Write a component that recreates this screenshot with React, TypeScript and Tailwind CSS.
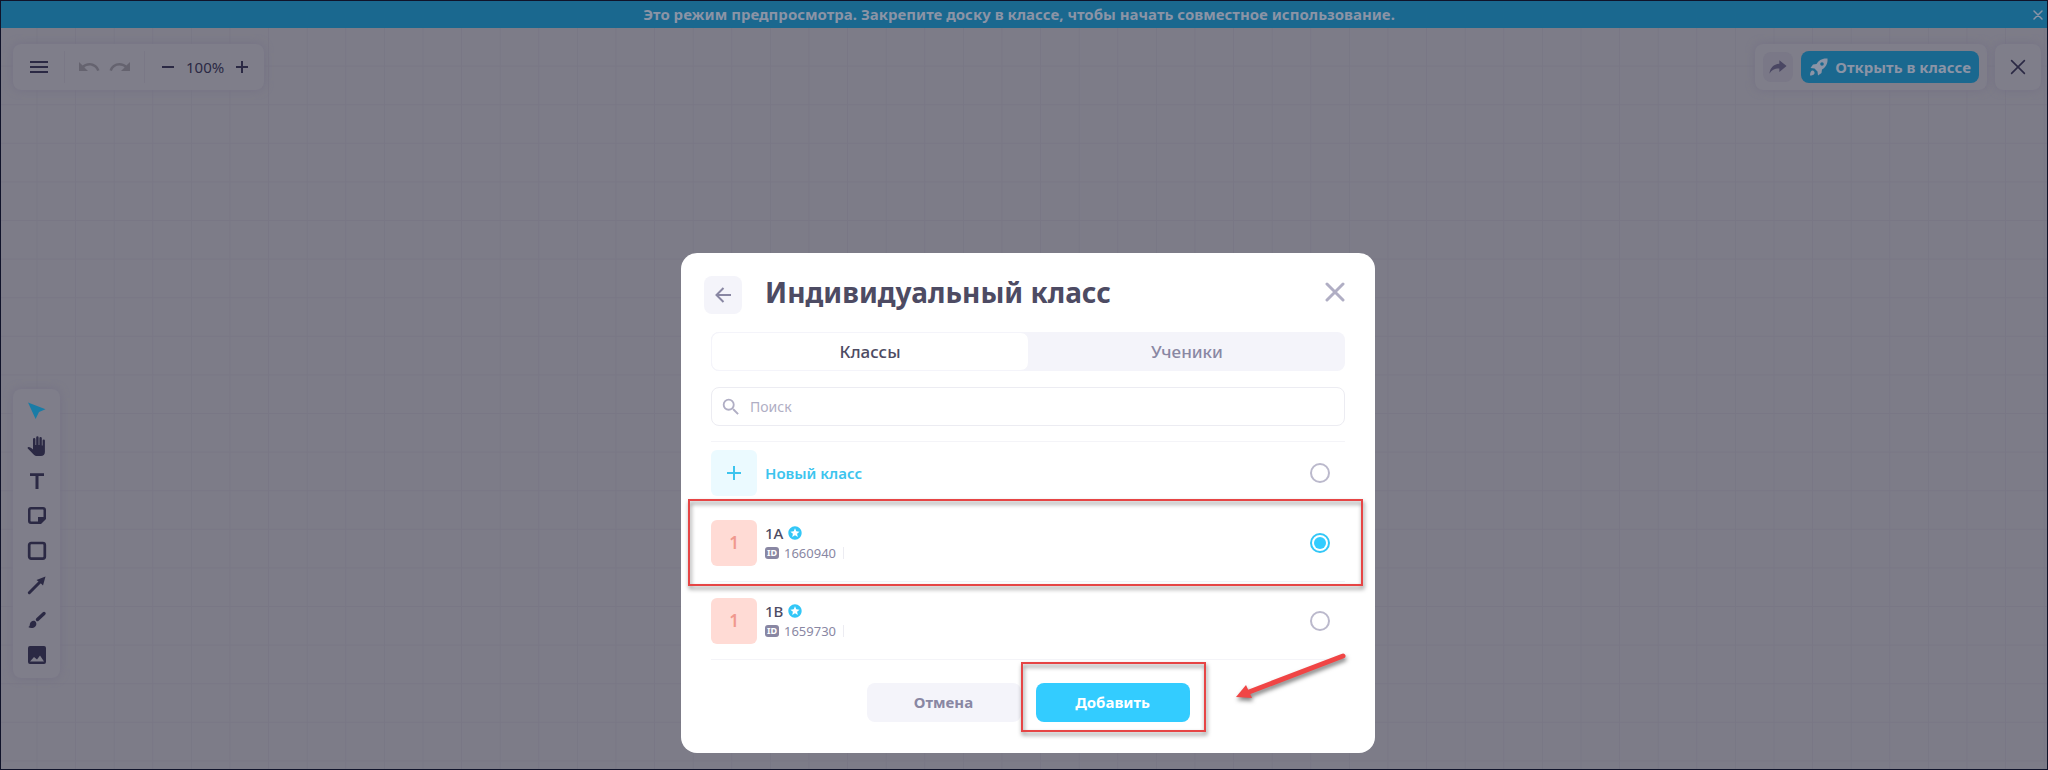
import { useState } from 'react'
import type { ReactNode } from 'react'
import { MdMenu, MdUndo, MdRedo, MdSearch, MdStars } from 'react-icons/md'

const tools = [
  {
    name: 'Выделение',
    active: true,
    icon: <path d="M1 1.5 18.5 8.2 12 11 8.6 18z" />,
  },
  {
    name: 'Рука',
    icon: (
      <path d="M6 10V3.200a1.200 1.200 0 0 1 2.400 0V9h.8V1.500a1.200 1.200 0 0 1 2.400 0V9h.8V2.200a1.200 1.200 0 0 1 2.400 0V9.500h.8V4.600a1.150 1.150 0 0 1 2.300 0V16c0 2.600-1.600 4-4 4H10c-1.600 0-2.600-.6-3.600-1.800L.8 12.400c-.5-.6 0-1.500.9-1.400 1 .1 3 1.200 4.300 2.500z" />
    ),
  },
  { name: 'Текст', icon: <path d="M3 2.200h14v2.800h-5.500V18h-3V5H3z" /> },
  {
    name: 'Стикер',
    icon: (
      <path
        fillRule="evenodd"
        d="M4 1h12a3 3 0 0 1 3 3v9l-5 5H4a3 3 0 0 1-3-3V4a3 3 0 0 1 3-3zm0 2.500a.6.6 0 0 0-.5.5v11c0 .3.2.5.5.5h7V11h5.500V4a.6.6 0 0 0-.5-.5z"
      />
    ),
  },
  {
    name: 'Фигура',
    icon: <rect x="2.200" y="2" width="15.600" height="15.600" rx="2" fill="none" stroke="currentColor" strokeWidth="2.700" />,
  },
  {
    name: 'Стрелка',
    icon: (
      <>
        <path d="M2.300 16.700 13 6" stroke="currentColor" strokeWidth="3" strokeLinecap="round" />
        <path d="M18.500.5 16 9.500 13.500 7 9.500 4z" />
      </>
    ),
  },
  {
    name: 'Кисть',
    icon: (
      <>
        <path d="M10.500 8.500 17 2.500" stroke="currentColor" strokeWidth="3.400" strokeLinecap="round" />
        <path d="M8 10a3.700 3.700 0 0 1 .3 5.500c-2 2-5 2-7 .6 1.400-.4 1.400-1.400 1.600-3 .3-2.500 3-4.200 5.100-3.100z" />
      </>
    ),
  },
  {
    name: 'Изображение',
    icon: (
      <path
        fillRule="evenodd"
        d="M3 0h14a2 2 0 0 1 2 2v14a2 2 0 0 1-2 2H3a2 2 0 0 1-2-2V2a2 2 0 0 1 2-2zm0 15.500h14l-4-6-3 4-3-2.500z"
      />
    ),
  },
]

const classes = [
  { id: '1660940', name: '1A' },
  { id: '1659730', name: '1B' },
]

function Icon({ children, size = 20 }: { children: ReactNode; size?: number }) {
  return (
    <svg width={size} height={size} viewBox="0 0 20 20" fill="currentColor" aria-hidden="true">
      {children}
    </svg>
  )
}

function Cross({ size, width }: { size: number; width: number }) {
  return (
    <svg width={size} height={size} viewBox="0 0 20 20" stroke="currentColor" strokeWidth={width} strokeLinecap="round" aria-hidden="true">
      <path d="M2 2 18 18M18 2 2 18" />
    </svg>
  )
}

function Radio({ id, checked, onChange }: { id: string; checked: boolean; onChange: () => void }) {
  return (
    <input
      id={id}
      type="radio"
      name="class"
      checked={checked}
      onChange={onChange}
      className="mr-[15px] size-5 appearance-none rounded-full border-2 border-[#bbb9cc] bg-clip-content p-[2px] checked:border-[#33c7f7] checked:bg-[#33ccff]"
    />
  )
}

function Board() {
  return (
    <div className="relative flex flex-1 flex-col justify-between">
      <svg className="absolute inset-0 h-full w-full" aria-hidden="true">
        <defs>
          <pattern id="grid" x="35.500" y="-1" width="38.600" height="38.600" patternUnits="userSpaceOnUse">
            <path d="M.5 0V38.600M0 .5H38.600" stroke="#797785" strokeWidth="1" />
          </pattern>
        </defs>
        <rect width="100%" height="100%" fill="url(#grid)" />
      </svg>

      <div className="relative flex justify-between pt-4 pr-[6px] pl-3">
        <div className="flex h-[46px] items-center rounded-lg bg-[#7f7e8a] pr-4 shadow-[0_0_8px_#757285]">
          <button aria-label="Меню" className="pr-[13px] pl-[14px]">
            <MdMenu size={24} />
          </button>
          <div className="flex h-8 items-center gap-[7px] border-x border-[#7a7886] px-3 text-[#65636f]">
            <button aria-label="Отменить"><MdUndo size={24} /></button>
            <button aria-label="Повторить"><MdRedo size={24} /></button>
          </div>
          <div className="flex items-center gap-3 pl-[17px] text-[15px]">
            <button aria-label="Уменьшить">
              <svg width="12" height="12" stroke="currentColor" strokeWidth="2"><path d="M0 6H12" /></svg>
            </button>
            100%
            <button aria-label="Увеличить">
              <svg width="12" height="12" stroke="currentColor" strokeWidth="2"><path d="M0 6H12M6 0V12" /></svg>
            </button>
          </div>
        </div>

        <div className="flex gap-2">
          <div className="flex h-[46px] items-center gap-2 rounded-lg bg-[#7f7e8a] px-2 shadow-[0_0_8px_#757285]">
            <button aria-label="Поделиться" className="flex size-[30px] items-center justify-center rounded-lg bg-[#7a7887] text-[#4a4763]">
              <Icon size={18}>
                <path d="M11.500 2.500 19.500 9l-8 6.500v-3.800C6.500 11.500 3 13 .5 17.500 1.200 11 5 6.800 11.500 6.300z" />
              </Icon>
            </button>
            <button className="flex h-8 items-center gap-[6px] rounded-lg bg-[#1a688f] px-2 text-[15px] font-bold text-[#8b94a6]">
              <Icon>
                <path fillRule="evenodd" d="M18.500 1.500C13 1 9.500 3.500 7.500 7L4 7.500 1.500 11l4 .5 3 3 .5 4 3.500-2.500.5-3.500c3.500-2 6-5.500 5.500-11zM13 5.200a1.800 1.800 0 1 1 0 3.600 1.800 1.800 0 0 1 0-3.600z" />
                <path d="M3 13.500c1.500-.5 3 1.500 2.500 3-.5 1.500-2.500 2-4.500 2 0-2 .500-4.500 2-5z" />
              </Icon>
              Открыть в классе
            </button>
          </div>
          <button aria-label="Закрыть доску" className="flex size-[46px] items-center justify-center rounded-lg bg-[#7f7e8a] shadow-[0_0_8px_#757285]">
            <Cross size={16} width={2} />
          </button>
        </div>
      </div>

      <div className="relative mb-[91px] ml-3 flex w-[47px] flex-col items-center gap-[15px] rounded-lg bg-[#7f7e8a] py-3 shadow-[0_0_8px_#757285]">
        {tools.map((tool) => (
          <button key={tool.name} aria-label={tool.name} className={tool.active ? 'text-[#1a7ca6]' : ''}>
            <Icon>{tool.icon}</Icon>
          </button>
        ))}
      </div>
    </div>
  )
}

function App() {
  const [selected, setSelected] = useState('1660940')
  const [query, setQuery] = useState('')

  return (
    <div className="relative flex min-h-screen flex-col border border-[#10132a] bg-[#7d7c88] font-['Noto_Sans',sans-serif] text-[#2b2944]">
      <header className="flex h-[27px] items-center bg-[#1a688f] px-1 text-[#8b94a6]">
        <p className="flex-1 pb-[2px] text-center text-[15px] leading-5 font-bold">
          Это режим предпросмотра. Закрепите доску в классе, чтобы начать совместное использование.
        </p>
        <button aria-label="Закрыть">
          <Cross size={10} width={3} />
        </button>
      </header>

      <Board />

      <div className="absolute inset-0 flex items-end justify-center pb-4 pl-2">
        <div role="dialog" aria-labelledby="title" className="relative w-[694px] rounded-[16px] bg-white px-[30px] pt-[23px] pb-[31px] text-[#4d4b63]">
          <div className="-ml-[7px] flex h-[38px] items-center">
            <button aria-label="Назад" className="flex size-[38px] items-center justify-center rounded-lg bg-[#f4f4fa] text-[#8987a3]">
              <svg width="16" height="16" viewBox="0 0 16 16" fill="none" stroke="currentColor" strokeWidth="2" aria-hidden="true">
                <path d="M16 8H2M8.500 1 1.500 8l7 7" />
              </svg>
            </button>
            <div className="flex flex-1 items-center justify-between pb-[6px] pl-[23px]">
              <h1 id="title" className="text-[28px] leading-8 font-bold">Индивидуальный класс</h1>
              <button aria-label="Закрыть окно" className="text-[#b0aec4]">
                <Cross size={20} width={3} />
              </button>
            </div>
          </div>

          <div role="tablist" className="mt-[18px] flex h-[39px] rounded-lg bg-[#f4f4fa] text-[17px] font-medium">
            <button role="tab" aria-selected="true" className="flex-1 rounded-lg border border-[#f4f4fa] bg-white">Классы</button>
            <button role="tab" aria-selected="false" className="flex-1 text-[#8987a3]">Ученики</button>
          </div>

          <label className="mt-4 flex h-[39px] items-center gap-2 rounded-lg border border-[#ececf2] px-2 text-[#b0aec4]">
            <MdSearch size={22} />
            <input
              type="text"
              aria-label="Поиск"
              placeholder="Поиск"
              value={query}
              onChange={(e) => setQuery(e.target.value)}
              className="flex-1 text-sm text-[#4d4b63] outline-none placeholder:text-[#b0aec4]"
            />
          </label>

          <div className="mt-[15px] border-t border-[#f4f4f8]">
            <div className="flex h-[62px] items-center">
              <label htmlFor="new" className="flex flex-1 items-center gap-2 text-[15px] font-semibold text-[#3cc4ee]">
                <span className="flex size-[46px] items-center justify-center rounded-md bg-[#ebfaff]">
                  <svg width="14" height="14" stroke="currentColor" strokeWidth="2"><path d="M0 7H14M7 0V14" /></svg>
                </span>
                Новый класс
              </label>
              <Radio id="new" checked={selected === 'new'} onChange={() => setSelected('new')} />
            </div>
            {classes.map((item) => (
              <div key={item.id} className="flex h-[78px] items-center border-b border-[#f4f4f8]">
                <label htmlFor={item.id} className="flex flex-1 items-center gap-2">
                  <span className="flex size-[46px] items-center justify-center rounded-md bg-[#ffdbd5] text-[17px] font-semibold text-[#f0988e]">1</span>
                  <span>
                    <span className="flex items-center gap-1 text-[15px] leading-5 font-medium">
                      {item.name}
                      <MdStars size={16} className="text-[#33c7f7]" />
                    </span>
                    <span className="flex items-center gap-[5px] text-[13px] leading-5 text-[#8987a3]">
                      <span className="flex h-3 w-[14px] items-center justify-center rounded-[3px] bg-[#8987a3] text-[9px] font-bold text-white">ID</span>
                      {item.id}
                      <span className="ml-[2px] h-3 w-px bg-[#ececf2]" />
                    </span>
                  </span>
                </label>
                <Radio id={item.id} checked={selected === item.id} onChange={() => setSelected(item.id)} />
              </div>
            ))}
          </div>

          <div className="mt-[23px] flex justify-center gap-[15px] text-[15px] font-bold">
            <button className="h-[39px] w-[154px] rounded-lg bg-[#f4f4fa] text-[#8987a3]">Отмена</button>
            <button className="h-[39px] w-[154px] rounded-lg bg-[#33ccff] text-white">Добавить</button>
          </div>

          <div className="pointer-events-none absolute top-[246px] left-[7px] h-[87px] w-[675px] border-2 border-[#e64545] drop-shadow-[1px_3px_2px_#00000080]" />
          <div className="pointer-events-none absolute top-[409px] left-[340px] h-[70px] w-[185px] border-2 border-[#e64545] drop-shadow-[1px_3px_2px_#00000080]" />
          <svg className="pointer-events-none absolute top-[396px] left-[550px] drop-shadow-[1px_3px_2px_#00000080]" width="120" height="60" aria-hidden="true">
            <path d="M112 7 18 43" stroke="#f04545" strokeWidth="5" strokeLinecap="round" />
            <path d="M5 48 15 36 21 49z" fill="#f04545" />
          </svg>
        </div>
      </div>
    </div>
  )
}

export default App
